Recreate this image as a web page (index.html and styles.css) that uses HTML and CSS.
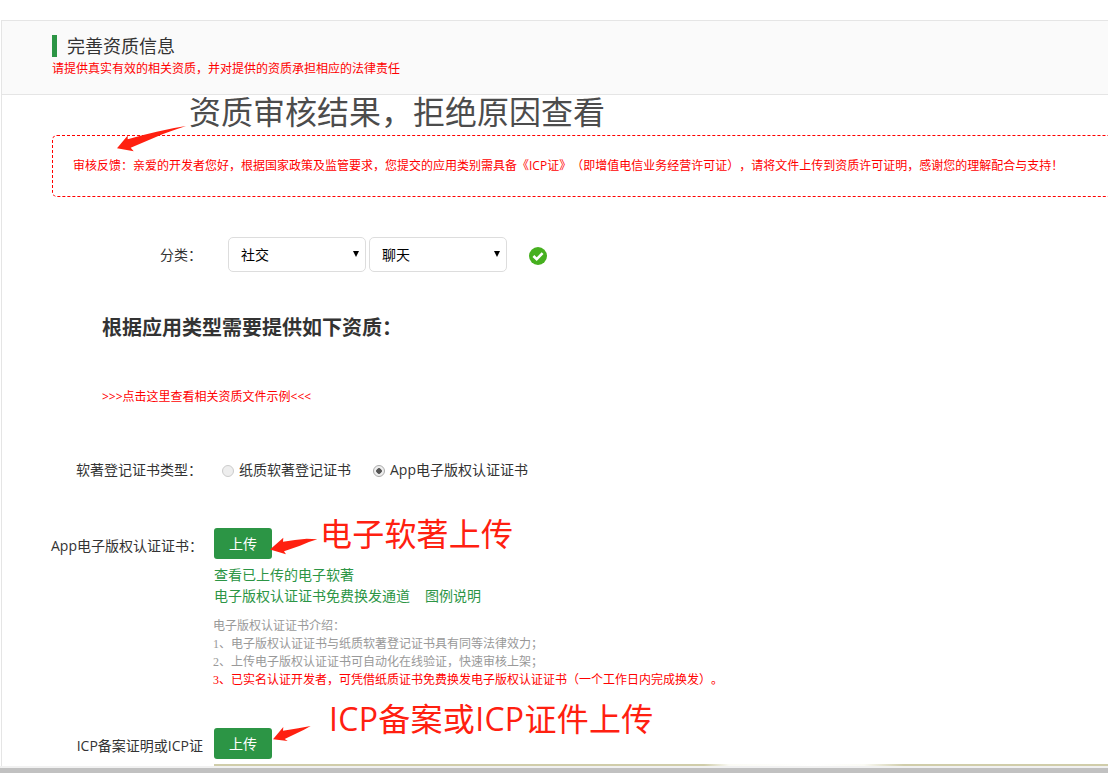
FILE: index.html
```
<!DOCTYPE html>
<html lang="zh-CN">
<head>
    <meta charset="UTF-8">
    <meta name="viewport" content="width=device-width, initial-scale=1.0">
    <title>完善资质信息</title>
    <link rel="stylesheet" href="styles.css">
</head>
<body>

<div class="panel">
    <div class="header">
        <h1>完善资质信息</h1>
        <p>请提供真实有效的相关资质，并对提供的资质承担相应的法律责任</p>
    </div>

    <div class="feedback">审核反馈：亲爱的开发者您好，根据国家政策及监管要求，您提交的应用类别需具备《ICP证》（即增值电信业务经营许可证），请将文件上传到资质许可证明，感谢您的理解配合与支持！</div>

    <div class="row category">
        <div class="label">分类：</div>
        <div class="select">社交<span class="caret"></span></div>
        <div class="select">聊天<span class="caret"></span></div>
        <svg class="ok" width="18" height="18" viewBox="0 0 18 18">
            <circle cx="9" cy="9" r="9" fill="#46b01f"/>
            <path d="M4.4 9 L7.7 12.2 L13.6 6.2" fill="none" stroke="#fff" stroke-width="2.6"/>
        </svg>
    </div>

    <h2>根据应用类型需要提供如下资质：</h2>
    <a class="example">&gt;&gt;&gt;点击这里查看相关资质文件示例&lt;&lt;&lt;</a>

    <div class="row cert-type">
        <div class="label">软著登记证书类型：</div>
        <div class="option"><span class="radio"></span>纸质软著登记证书</div>
        <div class="option"><span class="radio checked"></span>App电子版权认证证书</div>
    </div>

    <div class="row cert-upload">
        <div class="label">App电子版权认证证书：</div>
        <div class="content">
            <div class="btn">上传</div>
            <div class="links">
                <div><a>查看已上传的电子软著</a></div>
                <div><a>电子版权认证证书免费换发通道</a><a>图例说明</a></div>
            </div>
            <div class="intro">
                <p>电子版权认证证书介绍：</p>
                <p>1、电子版权认证证书与纸质软著登记证书具有同等法律效力；</p>
                <p>2、上传电子版权认证证书可自动化在线验证，快速审核上架；</p>
                <p class="red">3、已实名认证开发者，可凭借纸质证书免费换发电子版权认证证书（一个工作日内完成换发）。</p>
            </div>
        </div>
    </div>

    <div class="row icp-upload">
        <div class="label">ICP备案证明或ICP证</div>
        <div class="content">
            <div class="btn">上传</div>
            <div class="preview"></div>
        </div>
    </div>
</div>
<div class="scrollbar"></div>

<!-- notes over the form -->
<div class="note note-result">资质审核结果，拒绝原因查看</div>
<div class="note note-soft">电子软著上传</div>
<div class="note note-icp">ICP备案或ICP证件上传</div>
<svg class="arrow arrow-result" width="72" height="28" viewBox="0 0 72 28">
    <path d="M0 23.3 L10.7 10.5 L10.7 14.3 Q25 10 39.7 6.7 Q55 3 69 1 Q57 5 46 9 L13.7 22.7 L16.7 26.3 Z"/>
</svg>
<svg class="arrow arrow-soft" width="48" height="20" viewBox="0 0 48 20">
    <path d="M0 12.5 L13.3 0.7 L13 4.7 Q25 2.5 36.7 1.7 L47.3 2.3 Q38 5 30 8.7 L14 14.3 L16 17.3 Z"/>
</svg>
<svg class="arrow arrow-icp" width="40" height="20" viewBox="0 0 40 20">
    <path d="M0 14.3 L10.3 2 L10 5.7 L25.3 3.3 L37.7 1 Q31 5 23.7 8.3 L11.7 14 L14.7 16 Z"/>
</svg>

</body>
</html>
```
FILE: styles.css
```
body {
    font-family: "Open Sans", "Noto Sans CJK SC", sans-serif;
    font-size: 14px;
    color: #333;
    background-color: white;
    margin: 0;
    padding-top: 20px;
    height: 753px;
    overflow: hidden;
    position: relative;
    text-spacing-trim: space-all;
    white-space: nowrap;
}
h1, h2, p {
    margin: 0;
}
.panel {
    height: 746px;
    margin-left: 1px;
    border-left: 1px solid #e5e5e5;
    border-top: 1px solid #e5e5e5;
    box-sizing: border-box;
    overflow: hidden;
}
.header {
    height: 74px;
    padding: 14px 0 0 50px;
    box-sizing: border-box;
    background-color: #fafafa;
    border-bottom: 1px solid #e5e5e5;
}
.header h1 {
    border-left: 5px solid #2c9545;
    padding-left: 10px;
    font-size: 18px;
    font-weight: normal;
    line-height: 22px;
}
.header p {
    color: red;
    font-size: 12px;
    line-height: 24px;
}
.feedback {
    margin: 40px -10px 0 50px;
    padding-left: 20px;
    height: 62px;
    line-height: 60px;
    box-sizing: border-box;
    border: 1px dashed red;
    border-radius: 5px;
    color: red;
    font-size: 12px;
}
.row {
    display: flex;
}
.label {
    width: 200px;
    box-sizing: border-box;
    text-align: right;
}
.category {
    margin-top: 40px;
    line-height: 35px;
    align-items: center;
}
.category .label {
    margin-right: 26px;
}
.select {
    width: 138px;
    height: 35px;
    box-sizing: border-box;
    border: 1px solid #ddd;
    border-radius: 5px;
    padding: 0 6px 0 12px;
    margin-right: 3px;
    color: black;
    line-height: 34px;
    display: flex;
    justify-content: space-between;
}
.caret {
    margin-top: 13px;
    width: 0;
    height: 0;
    border-left: 3px solid transparent;
    border-right: 3px solid transparent;
    border-top: 6px solid black;
}
.ok {
    margin: 2px 0 0 19px;
}
h2 {
    margin: 41px 0 0 100px;
    font-size: 20px;
    line-height: 30px;
}
.example {
    display: block;
    margin: 44px 0 0 100px;
    color: red;
    font-size: 12px;
    line-height: 20px;
}
.cert-type {
    margin-top: 53px;
    line-height: 20px;
}
.option {
    display: flex;
    align-items: center;
    margin-left: 20px;
}
.option + .option {
    margin-left: 22px;
}
.radio {
    width: 12px;
    height: 12px;
    box-sizing: border-box;
    border: 1px solid #ccc;
    border-radius: 50%;
    background-color: #eee;
    margin: 2px 5px 0 0;
}
.radio.checked {
    border-color: #aaa;
    background: radial-gradient(circle, #555 0, #555 2.5px, #eee 3px);
}
.cert-upload {
    margin-top: 48px;
}
.cert-upload .label, .icp-upload .label {
    width: 201px;
    line-height: 36px;
}
.content {
    margin-left: 11px;
}
.btn {
    width: 58px;
    height: 31px;
    line-height: 31px;
    border-radius: 3px;
    background-color: #2c9545;
    color: white;
    text-align: center;
}
.links {
    margin-top: 5px;
    color: #2c9545;
    line-height: 21px;
}
.links a + a {
    margin-left: 15px;
}
.intro {
    margin: 11px 0 0 -1px;
    color: #999;
    font-family: "Liberation Serif", "Noto Sans CJK SC", sans-serif;
    font-size: 12px;
    line-height: 18px;
}
.red {
    color: red;
}
.icp-upload {
    margin-top: 39px;
}
.icp-upload .content {
    flex: 1;
}
.preview {
    margin-top: 5px;
    height: 2px;
    background: linear-gradient(to right, #d0cdaa 490px, #fbfbf5 515px, #fff 600px, #fbfbf5 650px, #d0cdaa 690px);
}
.scrollbar {
    height: 5px;
    border-top: 2px solid #f1f1f1;
    background-color: #c1c1c1;
}
.note {
    position: absolute;
    font-size: 32px;
    line-height: 40px;
    color: #ff2010;
}
.note-result {
    left: 189px;
    top: 92px;
    color: #4c4c4c;
}
.note-soft {
    left: 320px;
    top: 514px;
    letter-spacing: 0.2px;
}
.note-icp {
    left: 329px;
    top: 699px;
    letter-spacing: 0.3px;
}
.arrow {
    position: absolute;
    fill: #ff2010;
}
.arrow-result {
    left: 117px;
    top: 125px;
}
.arrow-soft {
    left: 270px;
    top: 537px;
}
.arrow-icp {
    left: 273px;
    top: 725px;
}
```
